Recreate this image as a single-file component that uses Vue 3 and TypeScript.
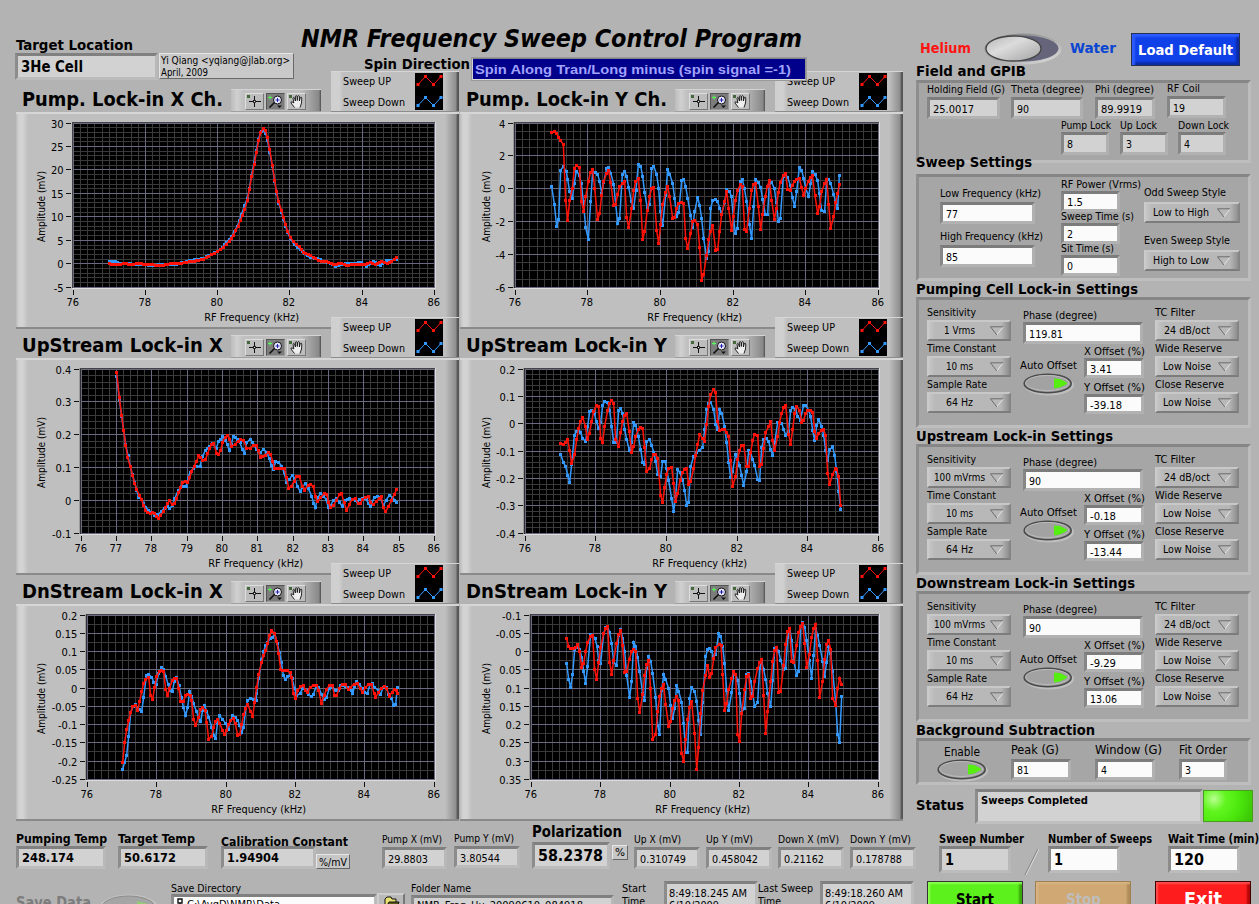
<script setup lang="ts">
import { h } from 'vue'

interface TxtProps { t: string; w: number; s?: number; h?: number }
interface FieldProps { l?: string; lw?: number; ls?: number; lh?: number; v: string; vw: number; vs?: number; w: number; h?: number }
interface DropProps { l: string; lw: number; lh?: number; v: string; vw: number; w: number; vl?: number }

// Single line of text fitted to a fixed width
const Txt = (p: TxtProps) => {
  const s = p.s ?? 11
  const H = p.h ?? 15
  return h('svg', { class: 'txt', width: p.w, height: H }, [
    h('text', { x: 0, y: Math.round(H / 2 + s * 0.36 - 0.4), 'font-size': s, textLength: p.w, lengthAdjust: 'spacingAndGlyphs' }, p.t),
  ])
}

const Field = (p: FieldProps) =>
  h('div', { class: 'field' }, [
    p.l ? Txt({ t: p.l, w: p.lw ?? 50, s: p.ls ?? 11, h: p.lh ?? 15 }) : null,
    h('div', { class: 'box', style: { width: p.w + 'px', height: (p.h ?? 22) + 'px' } }, [
      Txt({ t: p.v, w: p.vw, s: p.vs ?? 11, h: 16 }),
    ]),
  ])

const Drop = (p: DropProps) =>
  h('div', { class: 'drop' }, [
    Txt({ t: p.l, w: p.lw, h: p.lh ?? 15 }),
    h('div', { class: 'dropbtn', style: { width: p.w + 'px' } }, [
      h('span', { class: 'dropval', style: { width: (p.vl ?? 60) + 'px' } }, [Txt({ t: p.v, w: p.vw, h: 15 })]),
      h('svg', { width: 14, height: 10, class: 'tri' }, [
        h('path', { d: 'M.5 1H13L6.800 9Z', fill: '#b9b9b9' }),
        h('path', { d: 'M13 1L6.800 9', stroke: '#e4e4e4', fill: 'none' }),
        h('path', { d: 'M13 .8H.5L6.800 9', stroke: '#6c6c6c', fill: 'none' }),
      ]),
    ]),
  ])

const Oval = () =>
  h('svg', { class: 'oval', width: 52, height: 23, viewBox: '0 0 52 23' }, [
    h('ellipse', { cx: 26, cy: 12, rx: 25, ry: 10.5, fill: '#bebebe' }),
    h('ellipse', { cx: 24.700, cy: 10.5, rx: 23.500, ry: 9.2, fill: '#9d9d9d', stroke: '#4a4a4a', 'stroke-width': 1.6 }),
    h('ellipse', { cx: 24.200, cy: 10, rx: 21.500, ry: 7.600, fill: '#a2a2a2', stroke: '#bcbcbc', 'stroke-width': 1 }),
    h('path', { d: 'M31 5.500L37 6L44 9.500V11L37 14.500L31 15.500Z', fill: '#55ee10' }),
  ])

interface Chart {
  title: string; ox: number; oy: number
  x0: number; x1: number; tx0: number
  xs: number; ys: string[]; sub: number; rx: number; ax: number
  red: string; blue: string
}

// Plot geometry and traces use thirds of a pixel
const charts: Chart[] = [
  {
    title: 'Pump. Lock-in X Ch.', ox: 48, oy: 276, x0: 219, x1: 1305, tx0: 220, xs: 2, sub: 5, rx: 613, ax: 136,
    ys: ['30', '25', '20', '15', '10', '5', '0', '-5'],
    red: '329,729 333,734 360,733 378,730 395,734 415,730 440,733 465,735 490,736 510,730 530,731 560,727 590,722 610,717 635,704 652,695 670,681 688,663 700,645 714,618 727,587 734,568 742,542 748,508 755,470 763,432 769,397 776,362 782,338 790,326 797,332 802,352 809,388 817,436 824,480 829,515 836,545 845,572 850,592 857,614 863,635 871,651 880,665 897,680 910,697 925,704 940,711 955,722 980,725 1000,733 1025,730 1040,737 1060,733 1090,734 1110,728 1125,733 1145,723 1162,730 1175,723 1189,713',
    blue: '329,724 345,723 360,730 400,732 440,733 452,737 490,733 530,732 575,721 610,715 635,702 652,693 668,682 680,666 694,650 712,618 725,582 734,556 742,535 748,505 754,467 762,428 769,390 775,357 783,335 790,330 797,340 802,360 809,396 817,440 824,484 830,519 836,550 845,577 850,598 857,620 863,638 871,655 882,674 900,688 912,701 930,713 952,715 970,723 990,731 1006,738 1030,732 1060,731 1085,727 1100,738 1120,725 1140,736 1160,722 1175,721 1189,718',
  },
  {
    title: 'Pump. Lock-in Y Ch.', ox: 12, oy: 276, x0: 176, x1: 1269, tx0: 178, xs: 2, sub: 4, rx: 574, ax: 101,
    ys: ['4', '2', '0', '-2', '-4', '-6'],
    red: '287,338 295,335 302,341 308,352 314,362 322,374 329,541 335,601 341,541 349,505 355,445 361,436 370,443 377,545 383,574 389,529 397,485 403,458 410,448 416,505 425,599 431,580 437,525 443,485 452,459 458,452 464,487 473,556 479,553 485,523 491,500 499,490 506,485 512,592 518,623 527,565 533,512 539,485 547,476 554,540 560,659 566,634 574,570 581,529 587,505 593,502 602,632 608,670 614,612 620,552 629,518 635,499 641,530 650,595 656,592 662,565 668,550 677,547 683,550 689,655 695,685 704,640 710,605 716,601 725,613 731,683 737,781 743,763 752,705 758,658 764,634 770,616 779,691 785,688 791,634 797,583 806,545 812,514 818,566 827,631 832,590 838,541 845,512 853,493 859,500 866,628 872,634 880,566 887,512 893,493 899,490 907,560 914,628 920,583 928,529 934,499 940,481 947,540 955,599 961,566 967,517 973,487 982,466 989,461 995,508 1003,511 1009,495 1016,484 1022,478 1030,476 1037,503 1043,526 1049,505 1057,484 1063,472 1069,466 1077,526 1085,580 1091,558 1097,514 1106,490 1112,478 1118,552 1124,625 1133,590 1139,548 1145,520 1150,493',
    blue: '287,499 295,552 302,619 308,598 314,451 322,439 331,455 335,478 341,515 349,536 355,490 361,453 370,465 376,490 382,545 389,622 397,658 404,545 410,455 418,457 425,463 431,485 437,520 443,488 452,444 458,442 464,459 473,492 479,552 485,610 491,596 499,463 506,454 512,470 518,502 526,545 533,566 540,510 547,433 554,438 560,470 566,518 574,565 581,553 587,445 593,438 602,463 608,505 613,575 620,616 629,525 635,448 641,462 650,490 656,535 662,590 668,578 677,482 683,478 689,499 695,535 704,586 710,623 716,575 725,532 731,556 737,595 743,655 752,714 758,693 764,566 770,541 779,538 785,545 791,565 797,580 806,548 812,508 820,514 826,528 832,590 838,640 844,625 853,485 859,478 865,505 872,545 880,612 887,655 893,560 899,478 907,487 914,503 920,537 928,583 935,583 940,490 947,487 955,506 961,548 967,604 973,595 982,468 988,463 995,472 1003,496 1009,532 1016,559 1022,515 1030,442 1037,451 1043,475 1049,505 1058,529 1064,490 1069,454 1077,463 1085,481 1090,520 1097,572 1106,574 1112,480 1118,478 1124,490 1133,523 1139,545 1145,566 1150,466',
  },
  {
    title: 'UpStream Lock-in X', ox: 48, oy: 126, x0: 242, x1: 1305, tx0: 244, xs: 1, sub: 5, rx: 625, ax: 136,
    ys: ['0.4', '0.3', '0.2', '0.1', '0', '-0.1'],
    red: '350,170 358,244 365,299 371,344 377,387 383,425 391,452 398,479 404,502 410,520 418,537 425,551 431,569 437,582 443,590 452,592 458,590 464,591 470,602 476,607 482,597 490,587 497,573 503,562 509,553 516,566 524,562 530,546 536,530 542,515 548,500 557,496 563,498 569,485 575,466 583,450 590,435 596,419 602,424 608,434 617,430 623,412 629,397 635,385 641,383 650,412 656,415 662,402 668,380 675,364 683,358 689,370 695,390 706,385 714,375 722,371 730,372 740,397 750,397 760,388 768,387 774,404 782,423 795,418 805,409 812,414 818,436 824,457 840,458 853,458 860,485 866,516 874,512 882,495 890,482 898,482 907,510 914,522 924,508 932,506 940,511 946,540 952,557 962,545 972,533 980,534 986,560 992,574 1000,568 1010,552 1018,536 1025,533 1032,560 1040,582 1048,565 1056,550 1066,548 1074,561 1080,562 1088,550 1096,545 1105,542 1112,560 1120,566 1130,555 1138,546 1144,542 1150,575 1157,587 1165,572 1175,552 1183,534 1190,521',
    blue: '350,180 358,250 365,302 377,385 391,452 410,522 416,544 425,550 437,574 446,582 455,590 464,598 476,595 484,585 494,576 503,570 509,578 517,568 524,548 535,522 545,512 558,511 564,488 570,468 580,458 590,452 600,450 608,420 616,403 628,390 638,382 648,398 656,376 668,362 676,372 682,386 688,404 694,385 700,361 712,370 720,380 727,400 733,412 740,380 750,370 758,378 770,400 780,410 790,400 800,408 808,428 814,448 820,460 827,437 835,438 845,450 852,470 860,498 868,490 876,478 884,486 892,510 900,526 908,515 915,502 925,518 935,540 941,562 946,575 953,545 962,532 970,540 978,550 985,575 992,568 1000,552 1010,548 1018,558 1026,570 1036,553 1048,548 1060,550 1072,556 1086,546 1098,548 1105,562 1112,572 1122,545 1132,541 1142,545 1150,570 1158,552 1168,538 1178,545 1190,559',
  },
  {
    title: 'UpStream Lock-in Y', ox: 12, oy: 126, x0: 206, x1: 1269, tx0: 208, xs: 2, sub: 5, rx: 589, ax: 101,
    ys: ['0.2', '0.1', '0', '-0.1', '-0.2', '-0.3', '-0.4'],
    red: '314,382 322,385 329,379 335,370 341,403 347,443 356,415 362,370 368,337 374,315 380,304 388,330 394,371 400,353 407,316 413,286 421,268 428,272 434,366 440,380 446,330 455,283 461,262 467,254 473,262 479,370 488,391 494,350 500,315 506,298 512,293 520,347 527,409 533,392 539,361 547,341 554,334 560,337 566,394 572,466 581,458 587,430 593,415 599,414 605,427 614,538 620,560 626,514 632,475 638,457 647,454 653,502 659,556 665,533 672,493 680,469 686,459 692,457 698,505 704,496 713,457 719,418 725,385 731,355 740,367 746,376 752,325 758,270 764,236 773,220 779,229 785,316 791,343 800,340 806,340 812,349 818,361 824,433 830,511 839,480 845,430 851,403 857,388 863,388 872,450 878,452 884,410 890,373 896,355 905,358 911,450 917,445 923,397 929,349 938,331 944,316 950,373 956,403 965,360 971,318 977,292 983,275 989,268 998,355 1004,385 1010,340 1016,292 1022,271 1031,283 1037,319 1043,312 1049,292 1055,284 1064,283 1070,288 1076,345 1082,367 1088,352 1097,343 1103,341 1109,358 1115,472 1121,505 1130,475 1138,457 1142,460 1148,482 1154,568',
    blue: '314,415 322,439 329,451 335,478 341,499 347,445 355,357 362,346 368,337 374,350 380,367 389,376 395,330 401,287 407,284 415,292 421,317 428,338 434,320 440,268 446,256 455,259 461,284 467,330 473,379 481,378 488,284 494,278 500,293 506,340 512,370 520,403 527,380 533,320 539,328 547,361 554,400 560,439 566,445 572,377 580,370 587,388 593,408 599,436 605,475 614,481 620,436 627,436 632,457 638,494 647,548 653,587 659,540 665,460 672,470 680,493 686,523 692,568 698,559 704,451 713,421 722,408 730,403 740,394 746,340 752,280 758,263 764,260 773,280 779,325 785,340 791,280 797,292 806,331 812,379 818,439 824,485 830,465 839,415 845,430 851,448 857,478 863,508 872,466 878,403 884,412 890,430 896,448 905,490 911,493 917,395 923,371 930,366 938,377 944,400 950,418 956,380 965,319 977,322 983,340 989,358 998,345 1004,283 1010,274 1018,280 1025,300 1033,312 1043,268 1049,268 1058,282 1064,302 1070,343 1076,373 1082,328 1088,311 1097,331 1103,358 1109,403 1115,433 1121,400 1130,392 1136,418 1142,465 1148,526 1154,580',
  },
  {
    title: 'DnStream Lock-in X', ox: 48, oy: 126, x0: 260, x1: 1305, tx0: 262, xs: 2, sub: 2, rx: 634, ax: 136,
    ys: ['0.2', '0.15', '0.1', '0.05', '0', '-0.05', '-0.1', '-0.15', '-0.2', '-0.25'],
    red: '368,602 374,541 380,502 386,476 392,452 398,433 407,430 413,445 419,418 425,388 431,364 437,352 446,346 452,400 458,412 464,375 470,344 478,328 485,325 491,328 497,382 503,400 509,378 517,355 524,350 530,350 536,378 542,418 550,418 557,401 563,398 571,400 575,415 581,473 587,490 596,466 602,442 608,437 615,445 620,480 626,532 635,523 641,495 647,478 653,472 659,484 668,505 674,518 680,505 686,488 692,475 700,470 706,485 713,520 719,518 725,488 731,457 737,440 743,428 752,448 758,463 764,420 770,376 776,338 785,300 791,280 797,266 803,243 809,220 815,206 824,215 830,237 836,275 842,322 848,326 857,325 863,326 870,332 875,347 880,395 887,409 893,385 902,373 910,371 916,385 922,391 930,376 940,370 950,370 956,385 964,424 972,400 980,382 988,371 996,370 1004,400 1010,400 1018,380 1026,367 1035,366 1044,382 1052,376 1062,366 1072,363 1080,380 1088,391 1096,376 1106,368 1114,367 1122,393 1127,406 1136,390 1144,378 1153,374 1160,380 1168,402 1176,390 1184,382 1189,384 1192,394',
    blue: '368,622 374,600 380,580 386,523 392,452 400,432 407,427 413,440 419,442 425,448 431,406 439,341 446,338 455,345 461,360 468,368 476,335 485,316 491,322 497,343 505,368 511,385 517,388 523,358 530,346 537,370 544,405 550,435 557,460 563,436 569,388 575,402 581,425 589,448 596,466 602,478 608,445 614,430 620,448 626,465 635,495 641,520 647,529 653,480 659,461 668,472 677,485 685,502 692,475 698,461 706,466 713,475 719,490 725,512 731,495 737,440 743,415 752,409 760,412 768,415 770,395 776,350 785,292 791,268 797,250 803,240 812,228 818,225 824,214 832,245 838,270 844,300 850,340 855,352 863,343 870,340 876,350 884,380 890,400 900,395 908,378 918,384 926,398 933,403 940,398 948,374 956,376 965,398 972,412 980,406 988,378 998,376 1006,385 1014,384 1022,370 1035,372 1045,376 1053,385 1058,395 1064,372 1070,358 1078,366 1086,378 1094,390 1102,394 1110,368 1116,364 1124,376 1134,385 1142,396 1150,375 1158,376 1166,396 1175,410 1181,430 1187,428 1192,376',
  },
  {
    title: 'DnStream Lock-in Y', ox: 12, oy: 126, x0: 224, x1: 1269, tx0: 226, xs: 2, sub: 2, rx: 598, ax: 101,
    ys: ['-0.1', '-0.05', '0', '0.05', '0.1', '0.15', '0.2', '0.25', '0.3', '0.35'],
    red: '332,230 338,253 344,259 352,259 358,256 365,248 371,268 377,316 383,304 389,268 395,241 403,223 410,220 416,322 422,352 428,300 434,256 443,215 449,200 455,193 461,301 467,337 473,295 482,244 488,218 494,206 500,250 506,331 512,328 520,292 527,268 533,262 539,268 545,409 551,451 560,397 566,340 572,308 578,296 584,380 590,532 599,517 605,448 611,404 617,380 623,368 629,427 638,493 644,478 650,439 656,415 662,404 668,415 677,575 683,598 689,532 695,472 701,435 707,418 716,514 722,622 728,556 734,454 740,385 749,340 755,310 761,346 767,334 773,290 779,256 789,247 795,250 800,338 806,445 812,424 818,382 827,349 833,329 839,337 845,518 851,538 857,454 866,382 872,343 878,338 884,409 890,403 896,358 905,319 911,301 917,292 923,400 929,514 935,448 944,358 950,298 956,266 962,256 968,391 974,388 983,310 989,247 995,209 1001,199 1007,298 1013,300 1022,250 1028,211 1034,194 1040,185 1046,244 1052,316 1060,278 1067,226 1073,199 1079,187 1085,295 1091,406 1100,358 1106,292 1112,247 1118,236 1124,262 1130,409 1139,430 1145,380 1151,349 1157,367',
    blue: '332,304 338,352 344,376 350,337 356,262 365,256 371,262 377,285 383,328 389,364 395,313 404,217 410,220 417,228 423,253 428,295 434,304 443,215 449,196 455,196 461,212 467,244 473,300 482,310 488,220 494,203 500,228 506,268 512,340 521,406 527,358 533,241 539,253 545,285 551,328 560,395 566,415 572,318 578,284 584,298 590,334 599,406 605,490 611,517 617,385 623,338 629,352 638,380 644,430 650,469 656,440 662,370 668,388 677,421 683,484 689,570 695,571 701,410 707,376 716,388 722,418 728,475 734,517 740,421 749,284 755,262 761,259 767,268 773,283 779,278 788,214 794,223 800,253 806,304 812,385 818,445 827,391 833,334 839,337 845,355 851,395 857,450 866,439 872,337 878,334 884,357 890,395 896,433 905,421 911,318 917,298 923,323 929,352 935,395 944,433 950,355 956,258 962,258 968,268 974,295 983,322 989,320 995,225 1001,199 1007,235 1013,295 1022,340 1028,328 1034,192 1040,182 1046,195 1052,235 1060,295 1067,349 1073,280 1079,199 1085,220 1091,250 1100,298 1106,343 1112,300 1118,253 1124,275 1130,328 1139,420 1145,517 1151,541 1157,403',
  },
]

const snap = (v: number) => Math.floor(v / 3) * 3 + 1.5

const range = (n: number) => Array.from({ length: n }, (_, i) => i)

function geometry(c: Chart) {
  const top = c.oy + 33
  const bottom = c.oy + 528
  const left = c.tx0
  const right = c.x1 - 2
  const xAt = (f: number) => snap(left + (right - left) * f)
  const yAt = (f: number) => snap(top + (bottom - 2 - top) * f)
  const ny = (c.ys.length - 1) * c.sub
  const nx = 10 / c.xs
  return {
    top, bottom,
    minorX: range(51).map((i) => xAt(i / 50)),
    minorY: range(ny + 1).map((i) => yAt(i / ny)),
    majorX: range(nx + 1).map((i) => ({ p: xAt(i / nx), t: String(76 + i * c.xs) })),
    majorY: c.ys.map((t, i) => ({ p: yAt(i / (c.ys.length - 1)), t })),
  }
}

// Expands a trace so that sample markers stay about 2.5 pixels apart
function samples(src: string) {
  const pts = src.split(' ').map((p) => p.split(',').map(Number))
  const out: number[][] = []
  pts.forEach((p, i) => {
    out.push(p)
    const q = pts[i + 1]
    if (!q) return
    const n = Math.round((q[0] - p[0]) / 7.5)
    for (let k = 1; k < n; k++) out.push([p[0] + ((q[0] - p[0]) * k) / n, p[1] + ((q[1] - p[1]) * k) / n])
  })
  return out
}

const markers = (src: string) =>
  samples(src).map(([x, y]) => `M${Math.round((x - 4.5) / 3) * 3} ${Math.round((y - 4.5) / 3) * 3}h9v9h-9z`).join('')

const plots = charts.map((c) => ({
  ...c,
  g: geometry(c),
  series: [
    { color: '#3399ff', line: c.blue, marks: markers(c.blue) },
    { color: '#ff1208', line: c.red, marks: markers(c.red) },
  ],
}))

const lockins = [
  { title: 'Pumping Cell Lock-in Settings', w: 222, sens: '1 Vrms', sw: 31, phase: '119.81', pw: 34, x: '3.41', xw: 22, y: '-39.18', yw: 32 },
  { title: 'Upstream Lock-in Settings', w: 197, sens: '100 mVrms', sw: 51, phase: '90', pw: 12, x: '-0.18', xw: 26, y: '-13.44', yw: 32 },
  { title: 'Downstream Lock-in Settings', w: 219, sens: '100 mVrms', sw: 51, phase: '90', pw: 12, x: '-9.29', xw: 26, y: '13.06', yw: 27 },
]
</script>

<template>
  <div class="panel">
    <main class="left">
      <header class="head">
        <div class="target">
          <Txt class="bold" t="Target Location" :w="117" :s="14" :h="17" />
          <div class="targetrow">
            <Field class="bold" v="3He Cell" :vw="62" :vs="15" :w="143" :h="27" />
            <div class="author">
              <Txt t="Yi Qiang &lt;yqiang@jlab.org&gt;" :w="129" :s="10.5" :h="12" />
              <Txt t="April, 2009" :w="47" :s="10.5" :h="12" />
            </div>
          </div>
        </div>
        <div class="heading">
          <Txt class="bold italic" t="NMR Frequency Sweep Control Program" :w="501" :s="24.5" :h="32" />
          <div class="spin"><Txt class="bold" t="Spin Direction" :w="106" :s="14" :h="18" /></div>
        </div>
        <div class="spinbox"><Txt t="Spin Along Tran/Long minus (spin signal =-1)" :w="316" :s="13" :h="19" /></div>
      </header>

      <section class="charts">
        <article v-for="c in plots" :key="c.title" class="chart">
          <div class="charthead">
            <div class="ctitle"><Txt class="bold" :t="c.title" :w="201" :s="20" :h="26" /></div>
            <div class="tools">
              <span class="tool">
                <svg width="17" height="14"><rect x="1" y="1" width="3" height="3" fill="#44683a" /><path d="M3 7.500H15M8.500 2V13" stroke="#111" fill="none" /><rect x="7.500" y="6.500" width="2" height="2" fill="#ddd" stroke="#111" stroke-width=".8" /></svg>
              </span>
              <span class="tool on">
                <svg width="17" height="14"><path d="M1 3.500H5M3 1.500V5.500" stroke="#5f5" fill="none" /><circle cx="10.500" cy="6" r="4" fill="#e8e8ff" stroke="#111" /><path d="M8.500 6H12.500M10.500 4V8" stroke="#2222aa" fill="none" /><path d="M7.500 8.500L2.500 13.500" stroke="#111" stroke-width="1.600" /><path d="M10 11.500H15L12.500 14Z" fill="#111" /></svg>
              </span>
              <span class="tool">
                <svg width="17" height="14"><rect x="1" y="1" width="3" height="3" fill="#44683a" /><path d="M6.500 13.500L3 9Q2.500 7 5 8.300L5.800 9L5 4Q5.600 2.600 6.600 4L7.400 7V2.200Q8.200 1 9 2.200L9.300 6.500L9.800 2Q10.700 1 11.400 2.200V7L12.300 3.500Q13.400 2.600 13.800 4L13.500 9L12 13.500" fill="#eee" stroke="#111" stroke-width=".9" /></svg>
              </span>
            </div>
            <div class="legend">
              <div class="legtxt">
                <Txt t="Sweep UP" :w="48" :h="21" />
                <Txt t="Sweep Down" :w="62" :h="21" />
              </div>
              <svg class="swatch" width="28" height="37">
                <rect width="28" height="37" fill="#000" />
                <g v-for="(s, i) in [{ c: '#ff1208', y: 0 }, { c: '#3399ff', y: 21 }]" :key="i">
                  <path :d="`M3 ${s.y + 11.5}L10.500 ${s.y + 3.5}L18.500 ${s.y + 11.5}L26 ${s.y + 3.5}`" :stroke="s.c" fill="none" />
                  <path :d="`M1.500 ${s.y + 10}h3v3h-3zM9 ${s.y + 2}h3v3h-3zM17 ${s.y + 10}h3v3h-3zM24.500 ${s.y + 2}h3v3h-3z`" :fill="s.c" />
                </g>
              </svg>
            </div>
          </div>
          <div class="frame">
            <svg width="443" height="216" :viewBox="`${c.ox} ${c.oy} 1329 648`">
              <rect :x="c.x0 - 3" :y="c.g.top - 3" :width="c.x1 - c.x0 + 6" :height="501" fill="#dcdcdc" />
              <rect :x="c.x0 - 3" :y="c.g.top - 3" :width="c.x1 - c.x0 + 3" :height="498" fill="#444" />
              <rect :x="c.x0" :y="c.g.top" :width="c.x1 - c.x0" :height="495" fill="#000" />
              <g shape-rendering="crispEdges" stroke-width="3" fill="none">
                <path v-for="x in c.g.minorX" :key="'a' + x" :d="`M${x} ${c.g.top}V${c.g.bottom}`" stroke="#3a3a3a" />
                <path v-for="y in c.g.minorY" :key="'b' + y" :d="`M${c.x0} ${y}H${c.x1}`" stroke="#3a3a3a" />
                <path v-for="m in c.g.majorX" :key="'c' + m.p" :d="`M${m.p} ${c.g.top}V${c.g.bottom}`" stroke="#69697f" />
                <path v-for="m in c.g.majorY" :key="'d' + m.p" :d="`M${c.x0} ${m.p}H${c.x1}`" stroke="#69697f" />
                <path v-for="m in c.g.majorX" :key="'e' + m.p" :d="`M${m.p} ${c.g.bottom + 6}v15`" stroke="#111" />
                <path v-for="m in c.g.majorY" :key="'f' + m.p" :d="`M${c.x0 - 21} ${m.p}h15`" stroke="#111" />
              </g>
              <g class="num">
                <text v-for="m in c.g.majorX" :key="m.t" :x="m.p - 2" :y="c.g.bottom + 54" text-anchor="middle">{{ m.t }}</text>
                <text v-for="m in c.g.majorY" :key="m.t" :x="c.x0 - 28" :y="m.p + 14" text-anchor="end">{{ m.t }}</text>
                <text :x="c.rx" :y="c.g.bottom + 99" textLength="284" lengthAdjust="spacingAndGlyphs">RF Frequency (kHz)</text>
                <text :transform="`translate(${c.ax} ${c.oy + 390}) rotate(-90)`" textLength="213" lengthAdjust="spacingAndGlyphs">Amplitude (mV)</text>
              </g>
              <g v-for="s in c.series" :key="s.color">
                <polyline :points="s.line" fill="none" :stroke="s.color" stroke-width="4.500" />
                <path :d="s.marks" :fill="s.color" shape-rendering="crispEdges" />
              </g>
            </svg>
          </div>
        </article>
      </section>

      <footer class="foot">
        <div class="readouts">
          <Field class="bold" l="Pumping Temp" :lw="91" :ls="13" :lh="15" v="248.174" :vw="52" :vs="13" :w="90" :h="23" />
          <Field class="bold f1" l="Target Temp" :lw="77" :ls="13" :lh="15" v="50.6172" :vw="52" :vs="13" :w="90" :h="23" />
          <Field class="bold f2" l="Calibration Constant" :lw="127" :ls="13" :lh="8" v="1.94904" :vw="52" :vs="13" :w="95" :h="23" />
          <span class="unit u1"><Txt t="%/mV" :w="28" :h="12" /></span>
          <Field class="f3" l="Pump X (mV)" :lw="60" v="29.8803" :vw="40" :w="65" />
          <Field class="f4" l="Pump Y (mV)" :lw="60" v="3.80544" :vw="40" :w="66" />
          <Field class="bold f5" l="Polarization" :lw="90" :ls="15" :lh="20" v="58.2378" :vw="65" :vs="16" :w="78" :h="27" />
          <span class="unit u2"><Txt t="%" :w="10" :h="11" /></span>
          <Field class="f6" l="Up X (mV)" :lw="47" v="0.310749" :vw="46" :w="66" />
          <Field class="f7" l="Up Y (mV)" :lw="47" v="0.458042" :vw="46" :w="66" />
          <Field class="f7" l="Down X (mV)" :lw="61" v="0.21162" :vw="40" :w="66" />
          <Field class="f7" l="Down Y (mV)" :lw="61" v="0.178788" :vw="46" :w="66" />
        </div>
        <div class="filerow">
          <div class="save"><Txt class="bold" t="Save Data" :w="75" :s="15" :h="18" /></div>
          <svg class="saveoval" width="60" height="24"><ellipse cx="29" cy="14" rx="29" ry="13.500" fill="#c4c4c4" /><ellipse cx="28.500" cy="14" rx="27" ry="12" fill="#a5a5a5" stroke="#8b8b8b" /><path d="M37 7L52 11V17L37 20Z" fill="#93cc78" /></svg>
          <div class="dir">
            <Txt t="Save Directory" :w="70" :h="13" />
            <div class="path">
              <svg width="10" height="14"><path d="M2 2h4v4h-4zM2 9h4v4h-4zM4 6v3" stroke="#111" fill="none" stroke-width="1.400" /></svg>
              <Txt t="C:\AvgD\NMR\Data" :w="93" :h="14" />
            </div>
          </div>
          <span class="folder"><svg width="18" height="14"><path d="M2 13V3L4 1H8L9 3H13V6" fill="#e8e070" stroke="#111" /><path d="M2 13L6 6H16L13 13Z" fill="#5b5b20" stroke="#111" /></svg></span>
          <Field class="fname" l="Folder Name" :lw="60" :lh="13" v="NMR_Freq_Hu_20090610_084918" :vw="166" :w="203" :h="19" />
          <div class="lab2 st"><Txt t="Start" :w="24" :h="13" /><Txt t="Time" :w="23" :h="12" /></div>
          <div class="stamp"><Txt t="8:49:18.245 AM" :w="78" :h="12" /><Txt t="6/10/2009" :w="50" :h="12" /></div>
          <div class="lab2 ls"><Txt t="Last Sweep" :w="55" :h="13" /><Txt t="Time" :w="23" :h="12" /></div>
          <div class="stamp"><Txt t="8:49:18.260 AM" :w="78" :h="12" /><Txt t="6/10/2009" :w="50" :h="12" /></div>
        </div>
      </footer>
    </main>

    <aside class="right">
      <div class="mode">
        <Txt class="bold red" t="Helium" :w="51" :s="14.5" :h="20" />
        <svg class="toggle" width="78" height="33">
          <defs>
            <linearGradient id="knob" x1="0" y1="0" x2="1" y2="1"><stop offset="0" stop-color="#b5b5b5" /><stop offset=".4" stop-color="#dcdcdc" /><stop offset="1" stop-color="#a2a2a2" /></linearGradient>
            <linearGradient id="rim" x1="0" y1="0" x2="1" y2="1"><stop offset="0" stop-color="#777" /><stop offset=".55" stop-color="#aaa" /><stop offset="1" stop-color="#e6e6e6" /></linearGradient>
          </defs>
          <ellipse cx="39" cy="16" rx="38.500" ry="15.500" fill="url(#rim)" />
          <ellipse cx="39" cy="15.500" rx="35.500" ry="13" fill="#64647a" />
          <ellipse cx="29.500" cy="15.500" rx="27.500" ry="12.500" fill="url(#knob)" stroke="#444" stroke-width="1.300" />
        </svg>
        <Txt class="bold blue" t="Water" :w="46" :s="14.5" :h="20" />
        <button class="btn load"><Txt class="bold" t="Load Default" :w="95" :s="14.5" :h="20" /></button>
      </div>

      <section class="sec s1">
        <Txt class="bold" t="Field and GPIB" :w="110" :s="14" :h="19" />
        <div class="group">
          <div class="g1">
            <Field l="Holding Field (G)" :lw="78" :lh="16" v="25.0017" :vw="41" :w="73" />
            <Field l="Theta (degree)" :lw="73" :lh="16" v="90" :vw="12" :w="72" />
            <Field l="Phi (degree)" :lw="59" :lh="16" v="89.9919" :vw="41" :w="60" />
            <Field class="up1" l="RF Coil" :lw="33" :lh="16" v="19" :vw="12" :w="59" />
          </div>
          <div class="g2">
            <Field l="Pump Lock" :lw="50" :lh="14" v="8" :vw="6" :w="48" :h="23" />
            <Field l="Up Lock" :lw="37" :lh="14" v="3" :vw="6" :w="48" :h="23" />
            <Field l="Down Lock" :lw="51" :lh="14" v="4" :vw="6" :w="48" :h="23" />
          </div>
        </div>
      </section>

      <section class="sec s2">
        <Txt class="bold" t="Sweep Settings" :w="116" :s="14" :h="19" />
        <div class="group sweep ctl">
          <div class="ca">
            <Field l="Low Frequency (kHz)" :lw="101" :lh="17" v="77" :vw="12" :w="95" />
            <Field l="High Frequency (kHz)" :lw="103" :lh="17" v="85" :vw="12" :w="95" />
          </div>
          <div class="cb">
            <Field l="RF Power (Vrms)" :lw="80" :lh="14" v="1.5" :vw="16" :w="59" :h="21" />
            <Field l="Sweep Time (s)" :lw="73" :lh="14" v="2" :vw="6" :w="59" :h="21" />
            <Field l="Sit Time (s)" :lw="53" :lh="14" v="0" :vw="6" :w="59" :h="21" />
          </div>
          <div class="cc">
            <Drop l="Odd Sweep Style" :lw="82" :lh="19" v="Low to High" :vw="56" :w="96" :vl="70" />
            <Drop l="Even Sweep Style" :lw="86" :lh="19" v="High to Low" :vw="56" :w="96" :vl="70" />
          </div>
        </div>
      </section>

      <section v-for="k in lockins" :key="k.title" class="sec s3">
        <Txt class="bold" :t="k.title" :w="k.w" :s="14" :h="18" />
        <div class="group lock ctl">
          <div class="l1">
            <Drop l="Sensitivity" :lw="49" :v="k.sens" :vw="k.sw" :w="84" />
            <Drop l="Time Constant" :lw="69" v="10 ms" :vw="27" :w="84" />
            <Drop l="Sample Rate" :lw="60" v="64 Hz" :vw="27" :w="84" />
          </div>
          <div class="l2">
            <Field class="phase" l="Phase (degree)" :lw="74" :lh="14" :v="k.phase" :vw="k.pw" :w="120" />
            <div class="offs">
              <div class="auto"><Txt t="Auto Offset" :w="57" /><Oval /></div>
              <div class="xy">
                <Field l="X Offset (%)" :lw="61" :lh="13" :v="k.x" :vw="k.xw" :w="60" :h="20" />
                <Field l="Y Offset (%)" :lw="61" :lh="13" :v="k.y" :vw="k.yw" :w="60" :h="20" />
              </div>
            </div>
          </div>
          <div class="l1">
            <Drop l="TC Filter" :lw="40" v="24 dB/oct" :vw="46" :w="84" />
            <Drop l="Wide Reserve" :lw="67" v="Low Noise" :vw="48" :w="84" />
            <Drop l="Close Reserve" :lw="69" v="Low Noise" :vw="48" :w="84" />
          </div>
        </div>
      </section>

      <section class="sec s4">
        <Txt class="bold" t="Background Subtraction" :w="179" :s="14" :h="18" />
        <div class="group bg ctl">
          <div class="enable"><Txt t="Enable" :w="36" :s="12" :h="14" /><Oval /></div>
          <Field l="Peak (G)" :lw="48" :ls="12" :lh="18" v="81" :vw="12" :w="60" :h="21" />
          <Field l="Window (G)" :lw="67" :ls="12" :lh="18" v="4" :vw="6" :w="60" :h="21" />
          <Field l="Fit Order" :lw="48" :ls="12" :lh="18" v="3" :vw="6" :w="48" :h="21" />
        </div>
      </section>

      <div class="status">
        <Txt class="bold" t="Status" :w="48" :s="14" :h="20" />
        <div class="statbox"><Txt class="bold" t="Sweeps Completed" :w="107" :h="15" /></div>
        <div class="led"></div>
      </div>

      <div class="counts">
        <Field class="bold" l="Sweep Number" :lw="85" :ls="12" :lh="15" v="1" :vw="9" :vs="15" :w="72" :h="27" />
        <svg class="slash" width="16" height="28"><path d="M2 27L15 1" stroke="#777" /><path d="M3 27L16 1" stroke="#ddd" /></svg>
        <Field class="bold white" l="Number of Sweeps" :lw="104" :ls="12" :lh="15" v="1" :vw="9" :vs="15" :w="72" :h="27" />
        <Field class="bold white wait" l="Wait Time (min)" :lw="91" :ls="12" :lh="15" v="120" :vw="30" :vs="15" :w="72" :h="27" />
      </div>

      <div class="actions">
        <button class="btn start"><Txt class="bold" t="Start" :w="38" :s="15" :h="20" /></button>
        <button class="btn stop"><Txt class="bold" t="Stop" :w="35" :s="15" :h="20" /></button>
        <button class="btn exit"><Txt class="bold" t="Exit" :w="38" :s="19" :h="22" /></button>
      </div>
    </aside>
  </div>
</template>

<style>
html, body { margin: 0; overflow: hidden; background: #b3b3b3; }
</style>

<style scoped>
.panel {
  width: 1259px; height: 904px; overflow: hidden; display: flex;
  background: #b3b3b3; color: #000;
  font-family: "DejaVu Sans Condensed", "DejaVu Sans", "Liberation Sans", sans-serif;
  font-size: 11px;
}
.panel * { box-sizing: border-box; }
.panel :deep(.txt) { display: block; overflow: visible; fill: currentColor; flex: none; font-stretch: condensed; white-space: pre; }
.panel :deep(.bold), .bold { font-weight: bold; }
.italic { font-style: italic; }
.red { color: #ff1414; }
.blue { color: #0b46d2; }

.panel :deep(.field) { display: flex; flex-direction: column; flex: none; }
.panel :deep(.field > .txt) { position: relative; z-index: 1; }
.panel :deep(.box) {
  box-sizing: border-box; display: flex; align-items: center; padding: 1px 0 0 3px; flex: none;
  border: 3px solid; border-color: #808080 #b8b8b8 #bcbcbc #8c8c8c; background: #d2d2d2; overflow: hidden;
}
.group :deep(.box) { border-color: #7c7c7c #b0b0b0 #b2b2b2 #868686; }
.ctl :deep(.box), .white :deep(.box) { background: #fbfbfb; }
.panel :deep(.dropbtn) {
  box-sizing: border-box; height: 21px; display: flex; align-items: center;
  border: 2px solid; border-color: #c8c8c8 #858585 #7c7c7c #cbcbcb;
  background: linear-gradient(90deg, #c6c6c6, #b9b9b9 6px, #b7b7b7 calc(100% - 8px), #8f8f8f);
}
.panel :deep(.dropval) { display: flex; justify-content: center; flex: none; }
.panel :deep(.tri) { flex: none; margin: 1px 0 0 1px; }
.panel :deep(.oval) { display: block; }

.left { width: 909px; flex: none; display: flex; flex-direction: column; }
.head { height: 71px; flex: none; display: flex; position: relative; z-index: 5; padding-left: 16px; }
.target { width: 285px; flex: none; padding-top: 37px; }
.targetrow { display: flex; margin: -1px 0 0 -1px; }
.author {
  width: 135px; height: 26px; margin-left: 1px; padding: 1px 0 0 1px;
  background: #c9c9c9; border: 1px solid; border-color: #e4e4e4 #6a6a6a #6a6a6a #e4e4e4;
}
.heading { padding-top: 23px; }
.spin { padding: 0 0 0 63px; }
.spinbox {
  position: absolute; left: 471px; top: 57px; width: 336px; height: 24px; padding: 1px 0 0 2px;
  background: #00008a; color: #a2a2ff; font-family: "Liberation Sans", sans-serif; font-weight: bold;
  border: 2px solid; border-color: #858585 #909090 #d8d8d8 #d0d0d0; outline: 1px solid #9a9a9a; outline-offset: -1px;
}

.charts { display: grid; grid-template-columns: 444px 444px; grid-auto-rows: 246px; padding-left: 16px; height: 750px; flex: none; }
.chart { position: relative; height: 258px; }
.charthead { height: 41px; display: flex; align-items: flex-end; }
.ctitle { width: 215px; height: 41px; flex: none; padding: 15px 0 0 6px; }
.tools {
  width: 90px; height: 23px; flex: none; display: flex; gap: 2px; padding: 3px 0 0 14px;
  background: linear-gradient(90deg, #bcbcbc, #d0d0d0 6px, #c0c0c0 12px, #bcbcbc 70px, #888 88px, #4c4c4c);
  border-top: 1px solid #d4d4d4; border-bottom: 1px solid #a0a0a0;
}
.tool { width: 19px; height: 17px; border: 1px solid; border-color: #dedede #777 #777 #dedede; background: #bdbdbd; }
.tool.on { background: #7c7c7c; border-color: #555 #999 #999 #555; }
.tool svg { display: block; }
.legend {
  width: 128px; height: 41px; margin-left: 10px; flex: none; display: flex; padding: 0 0 0 12px;
  border-top: 1px solid #d6d6d6; border-bottom: 1px solid #8c8c8c;
  background: linear-gradient(90deg, #cfcfcf, #d0d0d0 8px, #bfbfbf 12px, #bfbfbf 114px, #8e8e8e 125px, #606060 126px, #505050);
}
.legtxt { width: 72px; flex: none; margin-top: -1px; }
.swatch { display: block; margin-top: 1px; }
.frame {
  width: 443px; height: 217px; border-top: 2px solid #d6d6d6; border-bottom: 2px solid #8a8a8a;
  background: linear-gradient(90deg, #bababa, #d3d3d3 3px, #d3d3d3 7px, #bfbfbf 12px, #bfbfbf 429px, #8e8e8e 440px, #606060 441px, #505050);
}
.frame svg { display: block; margin-top: -2px; }
.num { font-size: 33px; fill: #000; }

.foot { height: 83px; flex: none; position: relative; }
.readouts { display: flex; align-items: flex-end; height: 48px; padding-left: 16px; }
.f1 { margin-left: 11px; }
.f2 { width: 95px; margin-left: 13px; }
.f3 { margin-left: 32px; }
.f4 { margin-left: 7px; margin-bottom: 1px; }
.f5 { width: 78px; margin-left: 12px; }
.f6 { margin-left: 6px; }
.f7 { margin-left: 6px; }
.unit { background: #c6c6c6; border: 1px solid; border-color: #e6e6e6 #666 #666 #e6e6e6; padding: 1px 2px; flex: none; }
.u1 { width: 34px; height: 15px; }
.u2 { width: 16px; height: 15px; margin: 0 0 9px 2px; }
.filerow { display: flex; align-items: flex-start; height: 35px; padding-left: 16px; }
.save { width: 84px; flex: none; padding-top: 25px; color: #7c7c7c; }
.saveoval { flex: none; margin-top: 25px; display: block; }
.dir { width: 206px; flex: none; margin-left: 11px; padding-top: 13px; }
.path { height: 24px; margin-top: -1px; display: flex; border: 3px solid; border-color: #808080 #bcbcbc #c0c0c0 #8c8c8c; background: #fbfbfb; padding-left: 2px; }
.path svg:first-child { margin-right: 1px; }
.folder { width: 28px; height: 24px; margin: 24px 0 0; flex: none; padding: 1px 4px; background: #b9b9b9; border: 2px solid; border-color: #cdcdcd #777 #777 #cdcdcd; }
.fname { margin: 13px 0 0 6px; }
.filerow :deep(.box) { padding-top: 0; }
.lab2 { flex: none; padding-top: 13px; }
.st { width: 42px; margin-left: 8px; }
.ls { width: 62px; }
.stamp { width: 94px; height: 34px; flex: none; margin-top: 12px; padding: 3px 0 0 2px; border: 3px solid; border-color: #808080 #bcbcbc #c0c0c0 #8c8c8c; background: #d2d2d2; }

.right { width: 350px; flex: none; display: flex; flex-direction: column; padding-left: 7px; }
.mode { height: 61px; flex: none; display: flex; padding: 33px 0 0 4px; align-items: flex-start; }
.mode > .txt { margin-top: 5px; }
.toggle { margin: 0 8px 0 13px; display: block; flex: none; }
.btn { margin: 0; border: 2px solid; font-family: inherit; display: flex; justify-content: center; align-items: center; padding: 0; flex: none; }
.load { width: 109px; height: 33px; margin-left: 15px; color: #fff; background: #1040e8; border-color: #26314f; border-width: 1px; box-shadow: inset 3px 3px 2px #2c5cff, inset -3px -3px 2px #0a2aa8; }
.sec { flex: none; position: relative; }
.s1 { height: 91px; }
.s2 { height: 127px; }
.s3 { height: 147px; }
.s4 { height: 69px; }
.sec > .txt { position: relative; z-index: 2; margin: 1px 0 -1px; }
.group { width: 335px; border: 3px solid; border-color: #868686 #bcbcbc #bebebe #8e8e8e; background: #a6a6a6; }
.s1 .group { height: 83px; }
.g1 { display: grid; grid-template-columns: 84px 84px 72px 60px; padding-left: 8px; margin-top: -2px; }
.up1 { margin-top: -1px; }
.g2 { display: grid; grid-template-columns: 59px 58px 48px; padding-left: 142px; margin-top: -1px; }
.sweep { height: 107px; margin-top: 3px; display: grid; grid-template-columns: 121px 83px 96px; padding-left: 21px; }
.ca { padding-top: 8px; display: flex; flex-direction: column; gap: 4px; }
.cb > .field + .field { margin-top: -3px; }
.cc { padding-top: 6px; display: flex; flex-direction: column; gap: 8px; }
.lock { height: 131px; display: grid; grid-template-columns: 93px 135px 84px; padding-left: 8px; }
.l1 { padding-top: 5px; }
.phase { margin: 8px 0 0 3px; }
.offs { display: flex; }
.auto { width: 64px; padding-top: 14px; flex: none; }
.auto .oval { margin-left: 3px; }
.xy { padding-top: 1px; display: flex; flex-direction: column; gap: 3px; }
.bg { height: 47px; display: grid; grid-template-columns: 74px 84px 84px 60px; padding-left: 18px; }
.enable { padding-top: 4px; }
.enable > .txt { margin-left: 7px; }
.status { height: 37px; flex: none; display: flex; }
.status > .txt { margin-top: 6px; }
.statbox { width: 228px; height: 35px; margin-left: 11px; padding: 1px 0 0 3px; border: 3px solid; border-color: #808080 #bcbcbc #c0c0c0 #8c8c8c; background: #d2d2d2; flex: none; }
.led { width: 50px; height: 32px; border: 1px solid #4a9c20; background: radial-gradient(circle at 10px 8px, #b8ff90 0, #62f520 12px, #4be80c 26px, #2aa000 58px); margin-top: 1px; }
.counts { height: 48px; flex: none; display: flex; padding: 5px 0 0 23px; }
.counts .field { width: 72px; }
.counts :deep(.field > .txt) { top: 1px; }
.slash { margin: 17px 9px 0 12px; display: block; flex: none; }
.wait { margin-left: 48px; }
.actions { display: flex; padding-left: 11px; margin-top: 7px; }
.btn.start, .btn.stop, .btn.exit { width: 96px; height: 38px; border-width: 1px; }
.start { background: #5cf01c; border-color: #333; box-shadow: inset 2px 2px 2px #8cff50, inset -3px 0 2px #3aa50c; color: #000; }
.stop { background: #cfa873; border-color: #a08050; margin-left: 12px; color: #bdbdbd; box-shadow: inset 2px 2px 2px #d8b586, inset -3px 0 2px #b08c5a; }
.exit { background: #ff1c1c; border-color: #400; margin-left: 24px; color: #fff; box-shadow: inset 2px 2px 2px #ff5050, inset -3px 0 2px #b00808; }
</style>
